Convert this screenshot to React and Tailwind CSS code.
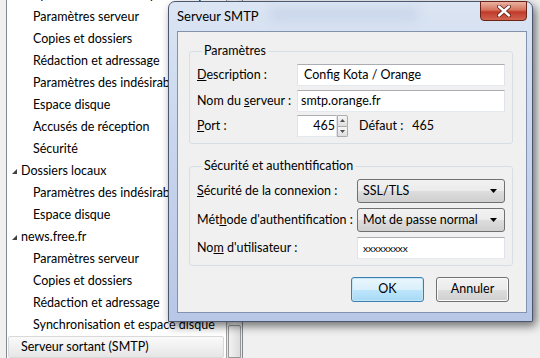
import React from 'react';

const TreeRow = ({ text, level = 1, expanded = false, selected = false }) => {
    if (selected) {
        return (
            <div className="h-[22px] flex items-center mr-[2px] pl-[12px] rounded-[2px] border border-[#d9d9d9] bg-[linear-gradient(180deg,#fafafa,#e6e6e6)]">
                {text}
            </div>
        );
    }
    if (level === 0) {
        return (
            <div className="h-[22px] flex items-center pl-[4px] whitespace-nowrap">
                <svg width="5" height="5" viewBox="0 0 5 5" className="mr-[4px]">
                    <polygon points="5,0 5,5 0,5" fill="#404040" />
                </svg>
                {text}
            </div>
        );
    }
    return <div className="h-[22px] flex items-center pl-[25px] whitespace-nowrap">{text}</div>;
};

const TextBox = ({ children, className = "" }) => (
    <div className={`h-[22px] flex items-center bg-white border border-[#abadb3] border-l-[#e2e3ea] border-r-[#e2e3ea] border-b-[#e3e9ef] ${className}`}>
        {children}
    </div>
);

const Combo = ({ value }) => (
    <div className="flex-1 h-[24px] flex items-center justify-between pl-[5px] pr-[7px] rounded-[3px] border border-[#707070] bg-[linear-gradient(180deg,#f2f2f2_0%,#ebebeb_50%,#dddddd_51%,#cfcfcf_100%)]">
        <span>{value}</span>
        <svg width="7" height="4" viewBox="0 0 7 4">
            <polygon points="0,0 7,0 3.5,4" fill="#000" />
        </svg>
    </div>
);

const tree = [
    { text: 'Synchronisation et espace disque' },
    { text: 'Paramètres serveur' },
    { text: 'Copies et dossiers' },
    { text: 'Rédaction et adressage' },
    { text: 'Paramètres des indésirables' },
    { text: 'Espace disque' },
    { text: 'Accusés de réception' },
    { text: 'Sécurité' },
    { text: 'Dossiers locaux', level: 0, expanded: true },
    { text: 'Paramètres des indésirables' },
    { text: 'Espace disque' },
    { text: 'news.free.fr', level: 0, expanded: true },
    { text: 'Paramètres serveur' },
    { text: 'Copies et dossiers' },
    { text: 'Rédaction et adressage' },
    { text: 'Synchronisation et espace disque' },
    { text: 'Serveur sortant (SMTP)', level: 0, selected: true },
];

export default function App() {
    return (
        <div className="relative w-[540px] h-[358px] overflow-hidden bg-[#f0f0f0] flex font-['Lato','Noto_Sans',sans-serif] text-[12.5px] text-black">
            {/* Account tree */}
            <div className="w-[6px] shrink-0" />
            <div className="w-[220px] shrink-0 bg-white border-l border-[#828790] pl-[1px] overflow-hidden">
                <div className="-mt-[16px]">
                    {tree.map((r, i) => (
                        <TreeRow key={i} {...r} />
                    ))}
                </div>
            </div>
            {/* Scrollbar */}
            <div className="w-[17px] shrink-0 border-l border-[#a0a0a0] border-r border-r-[#828790] bg-[linear-gradient(90deg,#e6e6e6,#f7f7f7,#e6e6e6)] flex flex-col justify-end">
                <div className="h-[33px] mx-[1px] rounded-t-[2px] border border-[#979797] bg-[linear-gradient(90deg,#f2f2f2,#dcdcdc)]" />
            </div>
            <div className="flex-1" />

            {/* SMTP dialog */}
            <div className="absolute left-[168px] top-[1px] w-[365px] h-[321px] flex flex-col rounded-t-[7px] border border-[#4b5670] bg-[linear-gradient(180deg,#dbe5f3_0%,#c9d6ee_40%,#b8c7e6_100%)] shadow-[3px_4px_10px_rgba(0,0,0,0.55)]">
                {/* title bar */}
                <div className="relative h-[29px] shrink-0 flex items-center pl-[8px]">
                    <div className="absolute left-[100px] top-[6px] w-[150px] h-[12px] rounded-full bg-[#a9bad9]/35 blur-[6px]" />
                    <span className="relative text-[13px]">Serveur SMTP</span>
                    <div className="absolute right-[5px] -top-[1px] w-[47px] h-[20px] rounded-b-[4px] border border-[#6b2417] bg-[linear-gradient(180deg,#eab2a3_0%,#d7725b_45%,#c0392a_55%,#d2654f_100%)] flex items-center justify-center">
                        <svg width="14" height="12" viewBox="0 0 14 12">
                            <path d="M2 1.5 L12 10.5 M12 1.5 L2 10.5" stroke="#5a1c12" strokeWidth="4" strokeLinecap="round" />
                            <path d="M2 1.5 L12 10.5 M12 1.5 L2 10.5" stroke="#ffffff" strokeWidth="2.4" strokeLinecap="round" />
                        </svg>
                    </div>
                </div>

                {/* client area */}
                <div className="flex-1 ml-[8px] mr-[5px] mb-[8px] border border-[#8393ad] bg-[#f0f0f0] pl-[11px] pr-[13px] pt-[11px]">
                    <fieldset className="border border-[#d5dfe5] rounded-[3px] pl-[7px] pr-[7px] pt-[5px] pb-[6px]">
                        <legend className="ml-[5px] px-[2px] leading-[16px]">Paramètres</legend>
                        <div className="flex items-center">
                            <div className="w-[100px] shrink-0"><u>D</u>escription :</div>
                            <TextBox className="flex-1 pl-[6px]">Config Kota / Orange</TextBox>
                        </div>
                        <div className="flex items-center mt-[4px]">
                            <div className="w-[100px] shrink-0">Nom du <u>s</u>erveur :</div>
                            <TextBox className="flex-1 pl-[3px]">smtp.orange.fr</TextBox>
                        </div>
                        <div className="flex items-center mt-[3px]">
                            <div className="w-[100px] shrink-0"><u>P</u>ort :</div>
                            <TextBox className="w-[40px] justify-end pr-[1px]">465</TextBox>
                            <div className="w-[11px] h-[22px] flex flex-col">
                                <div className="flex-1 border border-[#acacac] rounded-tr-[2px] bg-[linear-gradient(180deg,#f6f6f6,#dedede)] flex items-center justify-center">
                                    <svg width="5" height="3" viewBox="0 0 5 3"><polygon points="0,3 5,3 2.5,0" fill="#4d4d4d" /></svg>
                                </div>
                                <div className="flex-1 border border-t-0 border-[#acacac] rounded-br-[2px] bg-[linear-gradient(180deg,#f6f6f6,#dedede)] flex items-center justify-center">
                                    <svg width="5" height="3" viewBox="0 0 5 3"><polygon points="0,0 5,0 2.5,3" fill="#4d4d4d" /></svg>
                                </div>
                            </div>
                            <span className="ml-[11px]">Défaut :</span>
                            <span className="ml-[9px]">465</span>
                        </div>
                    </fieldset>

                    <fieldset className="mt-[14px] border border-[#d5dfe5] rounded-[3px] pl-[7px] pr-[7px] pt-[5px] pb-[6px]">
                        <legend className="ml-[5px] px-[2px] leading-[16px]">Sécurité et authentification</legend>
                        <div className="flex items-center">
                            <div className="w-[160px] shrink-0"><u>S</u>écurité de la connexion :</div>
                            <Combo value="SSL/TLS" />
                        </div>
                        <div className="flex items-center mt-[5px]">
                            <div className="w-[160px] shrink-0">Mét<u>h</u>ode d'authentification :</div>
                            <Combo value="Mot de passe normal" />
                        </div>
                        <div className="flex items-center mt-[5px]">
                            <div className="w-[160px] shrink-0">No<u>m</u> d'utilisateur :</div>
                            <TextBox className="flex-1 h-[21px] pl-[5px] text-[10px]">xxxxxxxxx</TextBox>
                        </div>
                    </fieldset>

                    <div className="mt-[11px] flex justify-end gap-[12px] pr-[4px]">
                        <button className="w-[73px] h-[25px] rounded-[3px] border border-[#3c7fb1] bg-[linear-gradient(180deg,#eaf6fd_0%,#d9f0fc_50%,#bee6fd_51%,#a7d9f5_100%)] shadow-[inset_0_0_0_1px_#c4e5f6]">
                            OK
                        </button>
                        <button className="w-[73px] h-[25px] rounded-[3px] border border-[#707070] bg-[linear-gradient(180deg,#f2f2f2_0%,#ebebeb_50%,#dddddd_51%,#cfcfcf_100%)] shadow-[inset_0_0_0_1px_#fcfcfc]">
                            Annuler
                        </button>
                    </div>
                </div>
            </div>
        </div>
    );
}
